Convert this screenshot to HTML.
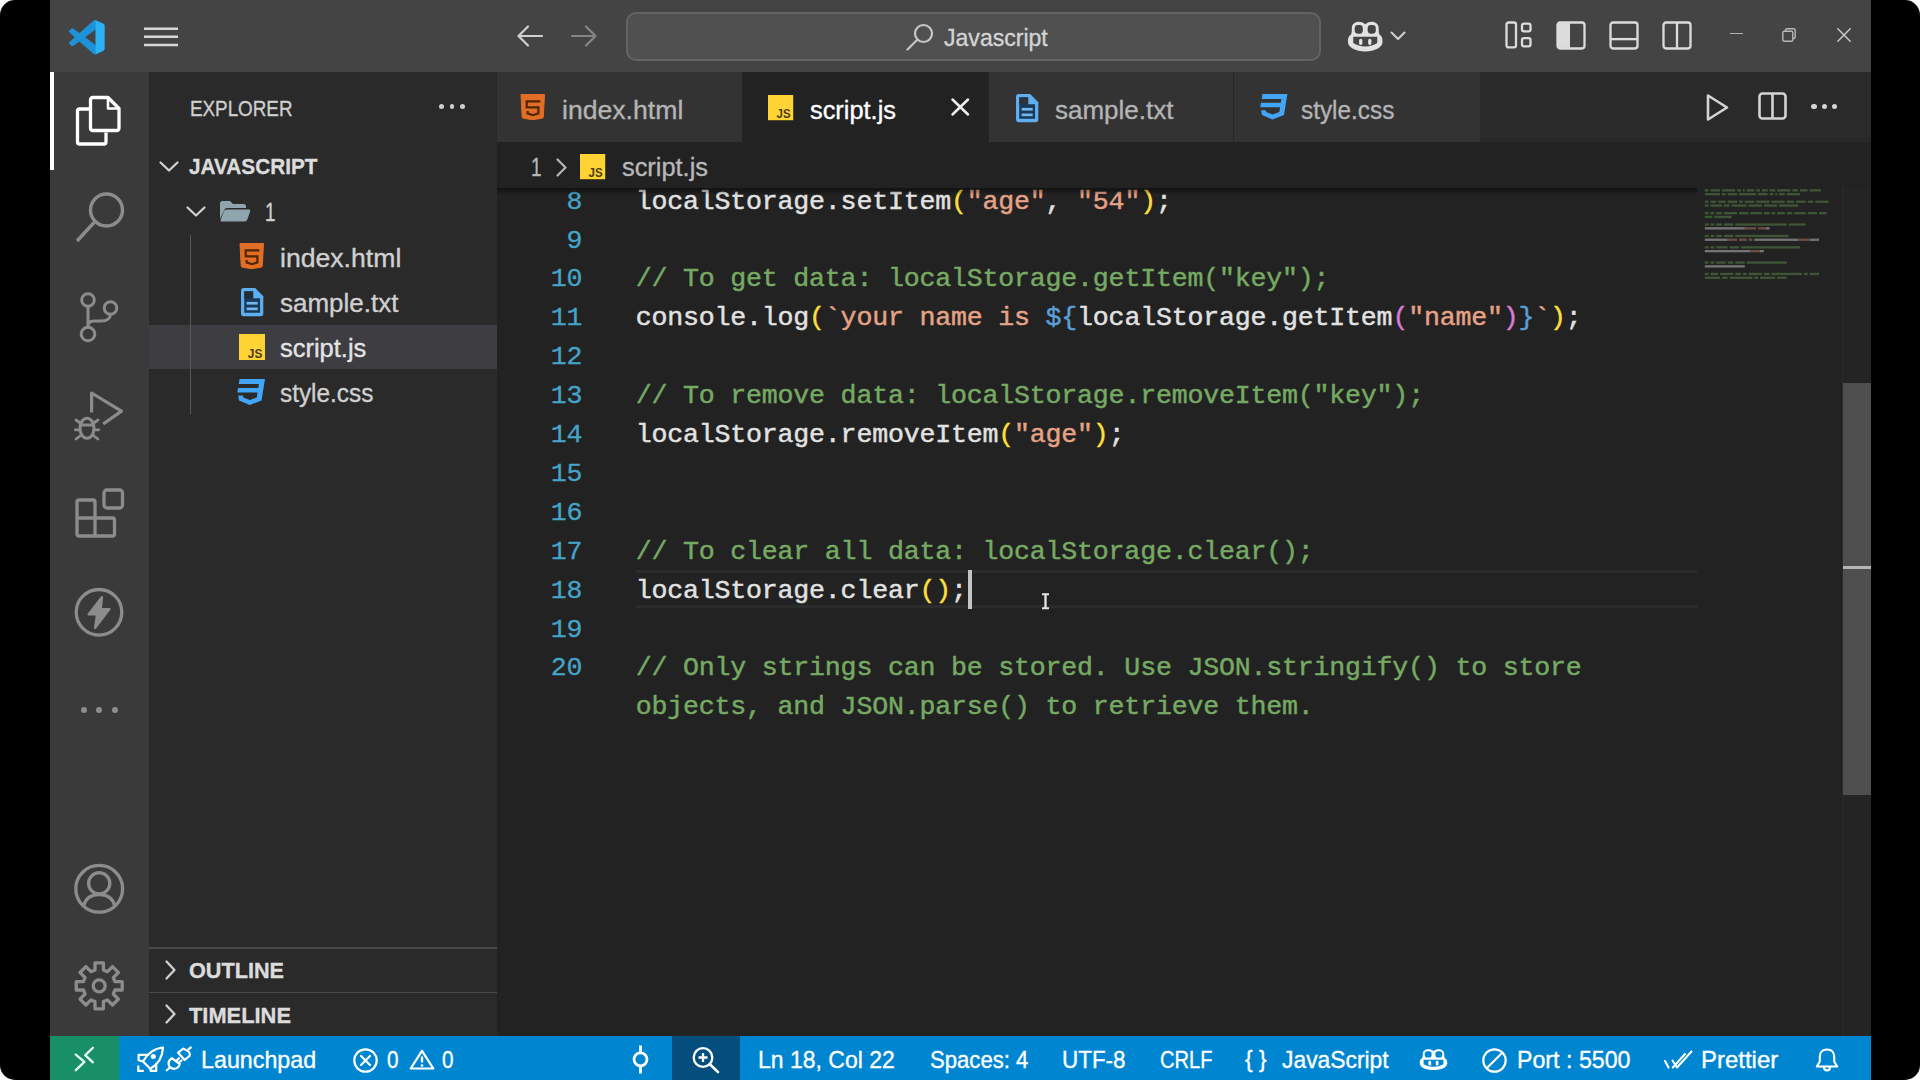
<!DOCTYPE html><html lang="en"><head><meta charset="utf-8"><title>script.js - Javascript - Visual Studio Code</title><style>
html,body{margin:0;padding:0;background:#fff;}
body{width:1920px;height:1080px;overflow:hidden;position:relative;font-family:"Liberation Sans",sans-serif;}
#frame{position:absolute;left:0;top:0;width:1920px;height:1080px;background:#000;border-radius:15px;overflow:hidden;}
.a{position:absolute;}
.t{position:absolute;white-space:nowrap;line-height:40px;height:40px;-webkit-text-stroke:0.35px;}
.m{font-family:"Liberation Mono",monospace;}
svg{position:absolute;overflow:visible;}
.cl{position:absolute;left:635.7px;white-space:pre;font-family:"Liberation Mono",monospace;font-size:26.6px;letter-spacing:-0.195px;line-height:39px;height:39px;color:#e2e2e2;-webkit-text-stroke:0.45px;}
.ln{position:absolute;left:520px;width:62.3px;text-align:right;white-space:pre;font-family:"Liberation Mono",monospace;font-size:26.6px;letter-spacing:-0.195px;line-height:39px;height:39px;color:#45a4c8;-webkit-text-stroke:0.3px;}
.c{color:#76aa63}.s{color:#e6a287}.y{color:#fbdf3c}.p{color:#d97bd9}.k{color:#5a9fd8}
</style></head><body><div id="frame">
<div class="a" style="left:50px;top:0px;width:1821px;height:1080px;background:#222222;"></div>
<div class="a" style="left:50px;top:0px;width:1821px;height:72px;background:#444444;"></div>
<div class="a" style="left:50px;top:72px;width:99px;height:964px;background:#3a3a3a;"></div>
<div class="a" style="left:149px;top:72px;width:348px;height:964px;background:#2a2a2a;"></div>
<div class="a" style="left:497px;top:72px;width:1374px;height:70px;background:#2a2a2a;"></div>
<div class="a" style="left:50px;top:1036px;width:1821px;height:44px;background:#0086d1;"></div>
<svg style="left:68.5px;top:19.5px" width="35.5" height="34.5" viewBox="0 0 100 100" preserveAspectRatio="none" >
<path d="M96.46 10.800 L75.86 0.880 C73.47 -0.270 70.62 0.210 68.75 2.090 L29.36 38.040 L12.19 25.010 C10.59 23.800 8.36 23.900 6.88 25.250 L1.37 30.260 C-0.45 31.910 -0.45 34.770 1.36 36.420 L16.25 50 L1.36 63.580 C-0.45 65.230 -0.45 68.090 1.37 69.740 L6.88 74.750 C8.36 76.100 10.59 76.200 12.19 74.990 L29.36 61.960 L68.75 97.910 C70.62 99.790 73.47 100.270 75.86 99.120 L96.47 89.200 C98.63 88.160 100 85.970 100 83.570 V16.430 C100 14.030 98.63 11.840 96.46 10.800 Z M75.02 72.700 L45.11 50 L75.02 27.300 Z" fill="#1d92d9" fill-rule="evenodd"/>
<path d="M75 0.500 L96.46 10.800 C98.63 11.840 100 14.030 100 16.430 V83.570 C100 85.970 98.63 88.160 96.47 89.200 L75 99.500 Z" fill="#2cb1f3"/>
</svg>
<svg style="left:144px;top:24px" width="34" height="26" viewBox="0 0 34 26" preserveAspectRatio="none" ><path d="M0 4.700 H34 M0 12.800 H34 M0 21 H34" stroke="#d6d6d6" stroke-width="2.600"/></svg>
<svg style="left:516px;top:24px" width="28" height="24" viewBox="0 0 28 24" preserveAspectRatio="none" ><path d="M26 12 H3 M12 2.5 L2.5 12 L12 21.5" fill="none" stroke="#d0d0d0" stroke-width="2.2" stroke-linecap="round" stroke-linejoin="round"/></svg>
<svg style="left:570px;top:24px" width="28" height="24" viewBox="0 0 28 24" preserveAspectRatio="none" ><path d="M2 12 H25 M16 2.5 L25.5 12 L16 21.5" fill="none" stroke="#858585" stroke-width="2.2" stroke-linecap="round" stroke-linejoin="round"/></svg>
<div class="a" style="left:626px;top:11.5px;width:695px;height:49.5px;background:#505050;border:2px solid #636363;border-radius:10px;box-sizing:border-box;"></div>
<svg style="left:905px;top:22px" width="30" height="30" viewBox="0 0 30 30" preserveAspectRatio="none" ><circle cx="18.5" cy="11.5" r="8.5" fill="none" stroke="#c8c8c8" stroke-width="2.2"/><path d="M12.5 17.5 L2.5 27.5" stroke="#c8c8c8" stroke-width="2.2" stroke-linecap="round"/></svg>
<span class="t " style="left:943.50px;top:17.78px;font-size:24.6px;color:#d4d4d4;transform:scaleX(0.9374);transform-origin:0 50%;">Javascript</span>
<svg style="left:1347px;top:19.5px" width="36.5" height="31.5" viewBox="0 0 38 30" preserveAspectRatio="none" >
<path d="M19 4 C14 0 5 1 5 8 C5 11 5 12 4 14 C1 16 1 18 1 21 C1 26 9 30 19 30 C29 30 37 26 37 21 C37 18 37 16 34 14 C33 12 33 11 33 8 C33 1 24 0 19 4 Z" fill="#e2e2e2"/>
<rect x="8" y="4.800" width="8.500" height="8.200" rx="3.300" fill="#444"/><rect x="21.500" y="4.800" width="8.500" height="8.200" rx="3.300" fill="#444"/>
<path d="M6.500 16 H31.500 V22 Q26 25.300 19 25.300 Q12 25.300 6.500 22 Z" fill="#444"/>
<rect x="12.600" y="17.800" width="3.400" height="6" rx="1.700" fill="#e2e2e2"/><rect x="22" y="17.800" width="3.400" height="6" rx="1.700" fill="#e2e2e2"/>
</svg>
<svg style="left:1390px;top:31px" width="16" height="10" viewBox="0 0 16 10" preserveAspectRatio="none" ><path d="M1.5 1.5 L8 8 L14.5 1.5" fill="none" stroke="#d0d0d0" stroke-width="2.1" stroke-linecap="round" stroke-linejoin="round"/></svg>
<svg style="left:1505px;top:21.3px" width="28" height="29" viewBox="0 0 28 28" preserveAspectRatio="none" ><rect x="1.5" y="1.5" width="9.5" height="24" rx="2" fill="none" stroke="#dcdcdc" stroke-width="2.3"/><rect x="17" y="2.5" width="8.5" height="7.500" rx="2" fill="none" stroke="#dcdcdc" stroke-width="2.3"/><rect x="17" y="16.5" width="8.5" height="8" rx="2" fill="none" stroke="#dcdcdc" stroke-width="2.3"/></svg>
<svg style="left:1556px;top:21.3px" width="30" height="29" viewBox="0 0 30 28" preserveAspectRatio="none" ><rect x="1.5" y="1.5" width="27" height="25" rx="2.5" fill="none" stroke="#dcdcdc" stroke-width="2.3"/><path d="M2 2 H14 V26 H2 Z" fill="#dcdcdc"/></svg>
<svg style="left:1609px;top:21.3px" width="30" height="29" viewBox="0 0 30 28" preserveAspectRatio="none" ><rect x="1.5" y="1.5" width="27" height="25" rx="2.5" fill="none" stroke="#dcdcdc" stroke-width="2.3"/><path d="M2 17.5 H28" stroke="#dcdcdc" stroke-width="2.3"/></svg>
<svg style="left:1662px;top:21.3px" width="30" height="29" viewBox="0 0 30 28" preserveAspectRatio="none" ><rect x="1.5" y="1.5" width="27" height="25" rx="2.5" fill="none" stroke="#dcdcdc" stroke-width="2.3"/><path d="M15 2 V26" stroke="#dcdcdc" stroke-width="2.3"/></svg>
<div class="a" style="left:1730px;top:32.5px;width:12.5px;height:1.5px;background:#b4b4b4;"></div>
<svg style="left:1782px;top:28px" width="14" height="14" viewBox="0 0 14 14" preserveAspectRatio="none" ><rect x="0.8" y="3.2" width="10" height="10" rx="1.5" fill="none" stroke="#b8b8b8" stroke-width="1.4"/><path d="M3.5 3 V2.2 Q3.5 0.8 5 0.8 H11.500 Q13.2 0.8 13.2 2.5 V9 Q13.2 10.500 11.800 10.500 H11" fill="none" stroke="#b8b8b8" stroke-width="1.4"/></svg>
<svg style="left:1837px;top:28px" width="14" height="14" viewBox="0 0 14 14" preserveAspectRatio="none" ><path d="M0.8 0.8 L13.2 13.2 M13.2 0.8 L0.8 13.2" stroke="#c8c8c8" stroke-width="1.5" stroke-linecap="round"/></svg>
<div class="a" style="left:50px;top:72px;width:4px;height:98px;background:#ffffff;"></div>
<svg style="left:74px;top:94px" width="48" height="53" viewBox="0 0 48 53" preserveAspectRatio="none" >
<path d="M17 15 H5.500 Q3.5 15 3.5 17 V48 Q3.5 50 5.500 50 H30 Q32 50 32 48 V38.500" fill="none" stroke="#fff" stroke-width="3.3" stroke-linejoin="round"/>
<path d="M19 3.5 H34 L45 14.500 V34 Q45 36.5 42.5 36.5 H19 Q16.5 36.5 16.5 34 V6 Q16.5 3.5 19 3.5 Z" fill="none" stroke="#fff" stroke-width="3.3" stroke-linejoin="round"/>
<path d="M34 4 V14.500 H44.500" fill="none" stroke="#fff" stroke-width="2.6" stroke-linejoin="round"/>
</svg>
<svg style="left:74px;top:190px" width="52" height="54" viewBox="0 0 52 54" preserveAspectRatio="none" ><circle cx="32.5" cy="20" r="16" fill="none" stroke="#8c8c8c" stroke-width="3.400"/><path d="M21 31.500 L3 51" stroke="#8c8c8c" stroke-width="3.400" stroke-linecap="butt"/></svg>
<svg style="left:74px;top:290px" width="50" height="56" viewBox="0 0 50 56" preserveAspectRatio="none" >
<circle cx="14" cy="10" r="6.3" fill="none" stroke="#8c8c8c" stroke-width="3"/>
<circle cx="36.5" cy="18" r="6.3" fill="none" stroke="#8c8c8c" stroke-width="3"/>
<circle cx="14" cy="44" r="6.8" fill="none" stroke="#8c8c8c" stroke-width="3"/>
<path d="M14 16.500 V37 M36.5 24.500 Q36 31 27 31 H20 Q14 31 14 36" fill="none" stroke="#8c8c8c" stroke-width="3"/>
</svg>
<svg style="left:72px;top:388px" width="54" height="56" viewBox="0 0 54 56" preserveAspectRatio="none" >
<path d="M19.600 24.400 V5 L49.500 23.100 L31.200 36" fill="none" stroke="#8c8c8c" stroke-width="3.200" stroke-linejoin="round"/>
<ellipse cx="15" cy="40.300" rx="7" ry="10" fill="none" stroke="#8c8c8c" stroke-width="3"/>
<path d="M8.500 37 H21.500 M4 32 L8.300 35 M3.300 41.800 H8 M4 51 L8.700 47.500 M26 32 L21.700 35 M26.700 41.800 H22 M26 51 L21.300 47.500" fill="none" stroke="#8c8c8c" stroke-width="2.800" stroke-linecap="round"/>
</svg>
<svg style="left:74px;top:487px" width="52" height="52" viewBox="0 0 52 52" preserveAspectRatio="none" >
<path d="M5 13 H19 Q21 13 21 15 V31 H38.500 Q40.500 31 40.500 33 V47 Q40.500 49 38.500 49 H5 Q3 49 3 47 V15 Q3 13 5 13 Z M3 31 H21 V49" fill="none" stroke="#8c8c8c" stroke-width="3.300" stroke-linejoin="round"/>
<rect x="30" y="3" width="18.5" height="18" rx="3" fill="none" stroke="#8c8c8c" stroke-width="3.300"/>
</svg>
<svg style="left:74px;top:587px" width="50" height="50" viewBox="0 0 50 50" preserveAspectRatio="none" >
<circle cx="25" cy="25.3" r="22.8" fill="none" stroke="#8c8c8c" stroke-width="3.300"/>
<path d="M28 10 L14.500 27.500 H23 L21 41 L35.500 22 H26.800 Z" fill="#8c8c8c" stroke="#8c8c8c" stroke-width="2.200" stroke-linejoin="round"/>
</svg>
<div class="a" style="left:80.5px;top:707px;width:6px;height:6px;border-radius:3px;background:#8c8c8c"></div>
<div class="a" style="left:96px;top:707px;width:6px;height:6px;border-radius:3px;background:#8c8c8c"></div>
<div class="a" style="left:111.5px;top:707px;width:6px;height:6px;border-radius:3px;background:#8c8c8c"></div>
<svg style="left:73px;top:863px" width="52" height="52" viewBox="0 0 52 52" preserveAspectRatio="none" >
<circle cx="26.200" cy="25.800" r="23.400" fill="none" stroke="#8c8c8c" stroke-width="3.300"/>
<circle cx="26.200" cy="20.300" r="10.600" fill="none" stroke="#8c8c8c" stroke-width="3.300"/>
<path d="M10.800 42.500 Q13.500 31.600 26.200 31.600 Q38.900 31.600 41.600 42.500" fill="none" stroke="#8c8c8c" stroke-width="3.300"/>
</svg>
<svg style="left:73px;top:960px" width="52" height="52" viewBox="0 0 52 52" preserveAspectRatio="none" ><path d="M22.0 10.0 L22.0 2.8 L30.4 2.8 L30.4 10.0 L34.4 11.7 L39.5 6.6 L45.4 12.5 L40.3 17.6 L42.0 21.6 L49.2 21.6 L49.2 30.0 L42.0 30.0 L40.3 34.0 L45.4 39.1 L39.5 45.0 L34.4 39.9 L30.4 41.6 L30.4 48.8 L22.0 48.8 L22.0 41.6 L18.0 39.9 L12.9 45.0 L7.0 39.1 L12.1 34.0 L10.4 30.0 L3.2 30.0 L3.2 21.6 L10.4 21.6 L12.1 17.6 L7.0 12.5 L12.9 6.6 L18.0 11.7 Z" fill="none" stroke="#8c8c8c" stroke-width="3.300" stroke-linejoin="round"/><circle cx="26.200" cy="25.800" r="6" fill="none" stroke="#8c8c8c" stroke-width="3.300"/></svg>
<span class="t " style="left:190.00px;top:89.17px;font-size:22.6px;color:#cfcfcf;transform:scaleX(0.8328);transform-origin:0 50%;">EXPLORER</span>
<div class="a" style="left:439.3px;top:104.3px;width:4.4px;height:4.4px;border-radius:3px;background:#d0d0d0"></div>
<div class="a" style="left:449.8px;top:104.3px;width:4.4px;height:4.4px;border-radius:3px;background:#d0d0d0"></div>
<div class="a" style="left:460.3px;top:104.3px;width:4.4px;height:4.4px;border-radius:3px;background:#d0d0d0"></div>
<svg style="left:159px;top:161px" width="20" height="11" viewBox="0 0 20 11" preserveAspectRatio="none" ><path d="M1.5 1.500 L10.0 9.5 L18.5 1.500" fill="none" stroke="#d0d0d0" stroke-width="2.3" stroke-linecap="round" stroke-linejoin="round"/></svg>
<span class="t " style="left:188.50px;top:147.17px;font-size:22.6px;color:#dcdcdc;font-weight:700;transform:scaleX(0.9191);transform-origin:0 50%;">JAVASCRIPT</span>
<svg style="left:186px;top:205.5px" width="20" height="11" viewBox="0 0 20 11" preserveAspectRatio="none" ><path d="M1.5 1.500 L10.0 9.5 L18.5 1.500" fill="none" stroke="#d0d0d0" stroke-width="2.3" stroke-linecap="round" stroke-linejoin="round"/></svg>
<svg style="left:219px;top:200px" width="32" height="22" viewBox="0 0 32 22" preserveAspectRatio="none" >
<path d="M1 19 V3.500 Q1 1 3.500 1 H11 L14 4 H24.5 Q27 4 27 6.500 V8 H8 Q6 8 5.300 10 Z" fill="#90a4ae"/>
<path d="M7.500 9.500 H30 Q31.800 9.500 31.200 11.300 L28.300 19.500 Q27.700 21.500 25.500 21.500 H3 Q1 21.500 1.800 19.500 L5 11 Q5.600 9.500 7.500 9.500 Z" fill="#90a4ae"/>
</svg>
<span class="t " style="left:264.80px;top:192.49px;font-size:26px;color:#d0d0d0;transform:scaleX(0.7260);transform-origin:0 50%;">1</span>
<div class="a" style="left:149px;top:325px;width:348px;height:44px;background:#3d3d42;"></div>
<div class="a" style="left:190px;top:235px;width:1.2px;height:179px;background:#585858;"></div>
<svg style="left:238.5px;top:242.5px" width="25.5" height="26.0" viewBox="0 0 25.5 26" preserveAspectRatio="none" >
<path d="M1 0.500 H24.500 L23.300 23 Q23.200 24 22.200 24.200 L12.800 25.700 L3.300 24.200 Q2.300 24 2.200 23 Z" fill="#e26d25" stroke="#e26d25" stroke-width="1" stroke-linejoin="round"/>
<path d="M20.300 7.400 H6.700 V13.300 H18.400 V19.400 L12.900 21.200 L7.600 19.400 V17" fill="none" stroke="#4f2608" stroke-width="2.200"/>
</svg>
<span class="t " style="left:279.50px;top:238.06px;font-size:25.8px;color:#d0d0d0;transform:scaleX(1.0316);transform-origin:0 50%;">index.html</span>
<svg style="left:239.5px;top:286.9px" width="24.3" height="30.2" viewBox="0 0 24 29" preserveAspectRatio="none" >
<path d="M3.500 1 H15 L23 9 V25.500 Q23 28 20.500 28 H3.500 Q1 28 1 25.500 V3.500 Q1 1 3.500 1 Z" fill="#5eaef0"/>
<path d="M4.200 4.200 H13 V10.800 H19.800 V24.800 H4.200 Z" fill="#17395a"/>
<path d="M4.200 4.200 H13 V10.800 H4.200 Z" fill="#2a2a2a" opacity="0.75"/>
<rect x="6.500" y="14.300" width="11" height="2.600" fill="#74b6ea"/><rect x="6.500" y="19.700" width="11" height="2.600" fill="#74b6ea"/>
</svg>
<span class="t " style="left:279.50px;top:283.06px;font-size:25.8px;color:#d0d0d0;transform:scaleX(1.0069);transform-origin:0 50%;">sample.txt</span>
<svg style="left:238.5px;top:334px" width="26.0" height="26.0" viewBox="0 0 26 26" preserveAspectRatio="none" >
<rect x="0" y="0" width="26" height="26" fill="#fdd433"/>
<text x="8.800" y="23.600" font-family="Liberation Sans, sans-serif" font-weight="700" font-size="12.500" fill="#4d3c0c" textLength="14.500" lengthAdjust="spacingAndGlyphs">JS</text>
</svg>
<span class="t " style="left:279.50px;top:328.06px;font-size:25.8px;color:#e4e4e4;transform:scaleX(0.9871);transform-origin:0 50%;">script.js</span>
<svg style="left:236.3px;top:379px" width="29.0" height="26.0" viewBox="0 0 29 26" preserveAspectRatio="none" >
<path d="M3.500 0 H29 L25.500 21.500 L13.800 26 L3 21.500 L2.200 16.500 H7 L7.300 18.500 L14 21 L20.800 18.500 L21.500 13.500 H1.300 L2 9 H22.300 L22.800 5 H2.800 Z" fill="#42a5f5"/>
</svg>
<span class="t " style="left:279.50px;top:373.06px;font-size:25.8px;color:#d0d0d0;transform:scaleX(0.9433);transform-origin:0 50%;">style.css</span>
<div class="a" style="left:149px;top:947px;width:348px;height:1.5px;background:#4a4a4a;"></div>
<div class="a" style="left:149px;top:991.5px;width:348px;height:1.5px;background:#4a4a4a;"></div>
<svg style="left:164.5px;top:959.5px" width="11" height="20" viewBox="0 0 11 20" preserveAspectRatio="none" ><path d="M1.5 1.500 L9.5 10.0 L1.500 18.5" fill="none" stroke="#d0d0d0" stroke-width="2.3" stroke-linecap="round" stroke-linejoin="round"/></svg>
<span class="t " style="left:188.50px;top:951.17px;font-size:22.6px;color:#dcdcdc;font-weight:700;transform:scaleX(0.9578);transform-origin:0 50%;">OUTLINE</span>
<svg style="left:164.5px;top:1004px" width="11" height="20" viewBox="0 0 11 20" preserveAspectRatio="none" ><path d="M1.5 1.500 L9.5 10.0 L1.500 18.5" fill="none" stroke="#d0d0d0" stroke-width="2.3" stroke-linecap="round" stroke-linejoin="round"/></svg>
<span class="t " style="left:189.00px;top:995.67px;font-size:22.6px;color:#dcdcdc;font-weight:700;transform:scaleX(0.9672);transform-origin:0 50%;">TIMELINE</span>
<div class="a" style="left:497px;top:72px;width:246px;height:70px;background:#333333;"></div>
<div class="a" style="left:743px;top:72px;width:245px;height:70.5px;background:#222222;"></div>
<div class="a" style="left:988px;top:72px;width:245px;height:70px;background:#333333;"></div>
<div class="a" style="left:1234px;top:72px;width:245.5px;height:70px;background:#333333;"></div>
<div class="a" style="left:742px;top:72px;width:1.2px;height:70px;background:#272727;"></div>
<div class="a" style="left:988px;top:72px;width:1.2px;height:70px;background:#272727;"></div>
<div class="a" style="left:1233px;top:72px;width:1.2px;height:70px;background:#272727;"></div>
<svg style="left:520.4px;top:94px" width="25.5" height="26.0" viewBox="0 0 25.5 26" preserveAspectRatio="none" >
<path d="M1 0.500 H24.500 L23.300 23 Q23.200 24 22.200 24.200 L12.800 25.700 L3.300 24.200 Q2.300 24 2.200 23 Z" fill="#e26d25" stroke="#e26d25" stroke-width="1" stroke-linejoin="round"/>
<path d="M20.300 7.400 H6.700 V13.300 H18.400 V19.400 L12.900 21.200 L7.600 19.400 V17" fill="none" stroke="#4f2608" stroke-width="2.200"/>
</svg>
<span class="t " style="left:562.00px;top:90.06px;font-size:25.8px;color:#b4b4b4;transform:scaleX(1.0316);transform-origin:0 50%;">index.html</span>
<svg style="left:768px;top:95px" width="25.22" height="25.22" viewBox="0 0 26 26" preserveAspectRatio="none" >
<rect x="0" y="0" width="26" height="26" fill="#fdd433"/>
<text x="8.800" y="23.600" font-family="Liberation Sans, sans-serif" font-weight="700" font-size="12.500" fill="#4d3c0c" textLength="14.500" lengthAdjust="spacingAndGlyphs">JS</text>
</svg>
<span class="t " style="left:809.50px;top:90.06px;font-size:25.8px;color:#ffffff;transform:scaleX(0.9836);transform-origin:0 50%;">script.js</span>
<svg style="left:950.5px;top:98px" width="18.5" height="18" viewBox="0 0 18.5 18" preserveAspectRatio="none" ><path d="M1.5 1.500 L17 16.500 M17 1.500 L1.500 16.500" stroke="#f0f0f0" stroke-width="2.5" stroke-linecap="round"/></svg>
<svg style="left:1015px;top:92.9px" width="24.3" height="30.2" viewBox="0 0 24 29" preserveAspectRatio="none" >
<path d="M3.500 1 H15 L23 9 V25.500 Q23 28 20.500 28 H3.500 Q1 28 1 25.500 V3.500 Q1 1 3.500 1 Z" fill="#5eaef0"/>
<path d="M4.200 4.200 H13 V10.800 H19.800 V24.800 H4.200 Z" fill="#17395a"/>
<path d="M4.200 4.200 H13 V10.800 H4.200 Z" fill="#333333" opacity="0.75"/>
<rect x="6.500" y="14.300" width="11" height="2.600" fill="#74b6ea"/><rect x="6.500" y="19.700" width="11" height="2.600" fill="#74b6ea"/>
</svg>
<span class="t " style="left:1055.00px;top:90.06px;font-size:25.8px;color:#b4b4b4;transform:scaleX(1.0078);transform-origin:0 50%;">sample.txt</span>
<svg style="left:1258.5px;top:94px" width="28.419999999999998" height="25.48" viewBox="0 0 29 26" preserveAspectRatio="none" >
<path d="M3.500 0 H29 L25.500 21.500 L13.800 26 L3 21.500 L2.200 16.500 H7 L7.300 18.500 L14 21 L20.800 18.500 L21.500 13.500 H1.300 L2 9 H22.300 L22.800 5 H2.800 Z" fill="#42a5f5"/>
</svg>
<span class="t " style="left:1301.00px;top:90.06px;font-size:25.8px;color:#b4b4b4;transform:scaleX(0.9433);transform-origin:0 50%;">style.css</span>
<svg style="left:1705px;top:92px" width="26" height="31" viewBox="0 0 26 31" preserveAspectRatio="none" ><path d="M3 3.500 L22 15.500 L3 27.500 Z" fill="none" stroke="#d4d4d4" stroke-width="2.6" stroke-linejoin="round"/></svg>
<svg style="left:1758px;top:92px" width="29" height="28" viewBox="0 0 29 28" preserveAspectRatio="none" ><rect x="1.5" y="1.500" width="26" height="25" rx="3" fill="none" stroke="#d4d4d4" stroke-width="2.6"/><path d="M14.500 2 V26" stroke="#d4d4d4" stroke-width="2.6"/></svg>
<div class="a" style="left:1811.4px;top:104.10000000000001px;width:5.2px;height:5.2px;border-radius:3px;background:#d4d4d4"></div>
<div class="a" style="left:1821.7px;top:104.10000000000001px;width:5.2px;height:5.2px;border-radius:3px;background:#d4d4d4"></div>
<div class="a" style="left:1832.1000000000001px;top:104.10000000000001px;width:5.2px;height:5.2px;border-radius:3px;background:#d4d4d4"></div>
<span class="t " style="left:531.00px;top:147.06px;font-size:25.8px;color:#b8b8b8;transform:scaleX(0.7316);transform-origin:0 50%;">1</span>
<svg style="left:556px;top:157.5px" width="11" height="19" viewBox="0 0 11 19" preserveAspectRatio="none" ><path d="M1.5 1.500 L9.5 9.5 L1.500 17.5" fill="none" stroke="#b8b8b8" stroke-width="2.2" stroke-linecap="round" stroke-linejoin="round"/></svg>
<svg style="left:580px;top:154px" width="25.22" height="25.22" viewBox="0 0 26 26" preserveAspectRatio="none" >
<rect x="0" y="0" width="26" height="26" fill="#fdd433"/>
<text x="8.800" y="23.600" font-family="Liberation Sans, sans-serif" font-weight="700" font-size="12.500" fill="#4d3c0c" textLength="14.500" lengthAdjust="spacingAndGlyphs">JS</text>
</svg>
<span class="t " style="left:621.50px;top:147.06px;font-size:25.8px;color:#b8b8b8;transform:scaleX(0.9836);transform-origin:0 50%;">script.js</span>
<div class="a" style="left:636px;top:570.3px;width:1061px;height:3px;background:#2c2c2c;"></div>
<div class="a" style="left:636px;top:605px;width:1061px;height:3px;background:#2c2c2c;"></div>
<div class="ln" style="top:182.61px">8</div>
<div class="ln" style="top:221.51px">9</div>
<div class="ln" style="top:260.41px">10</div>
<div class="ln" style="top:299.31px">11</div>
<div class="ln" style="top:338.21px">12</div>
<div class="ln" style="top:377.11px">13</div>
<div class="ln" style="top:416.01px">14</div>
<div class="ln" style="top:454.91px">15</div>
<div class="ln" style="top:493.81px">16</div>
<div class="ln" style="top:532.71px">17</div>
<div class="ln" style="top:571.61px">18</div>
<div class="ln" style="top:610.51px">19</div>
<div class="ln" style="top:649.41px">20</div>
<div class="cl" style="top:182.61px">localStorage.setItem<span class="y">(</span><span class="s">"age"</span>, <span class="s">"54"</span><span class="y">)</span>;</div>
<div class="cl" style="top:260.41px"><span class="c">// To get data<span>:</span> localStorage.getItem("key");</span></div>
<div class="cl" style="top:299.31px">console.log<span class="y">(</span><span class="s">`your name is </span><span class="k">${</span>localStorage.getItem<span class="p">(</span><span class="s">"name"</span><span class="p">)</span><span class="k">}</span><span class="s">`</span><span class="y">)</span>;</div>
<div class="cl" style="top:377.11px"><span class="c">// To remove data<span>:</span> localStorage.removeItem("key");</span></div>
<div class="cl" style="top:416.01px">localStorage.removeItem<span class="y">(</span><span class="s">"age"</span><span class="y">)</span>;</div>
<div class="cl" style="top:532.71px"><span class="c">// To clear all data<span>:</span> localStorage.clear();</span></div>
<div class="cl" style="top:571.61px">localStorage.clear<span class="y">()</span>;</div>
<div class="cl" style="top:649.41px"><span class="c">// Only strings can be stored. Use JSON.stringify() to store</span></div>
<div class="cl" style="top:688.31px"><span class="c">objects, and JSON.parse() to retrieve them.</span></div>
<div class="a" style="left:968px;top:570px;width:4px;height:38.5px;background:#c4c4c4;"></div>
<svg style="left:1042px;top:593px" width="7" height="16.5" viewBox="0 0 7 16.5" preserveAspectRatio="none" ><path d="M0 1.200 H7 M0 15.300 H7" stroke="#e6e6e6" stroke-width="2"/><path d="M3.500 1 V15.500" stroke="#e6e6e6" stroke-width="2.300"/></svg>
<div class="a" style="left:497px;top:188px;width:1200px;height:7px;background:linear-gradient(#00000077,#00000044 50%,#00000000)"></div>
<div class="a" style="left:1842px;top:188px;width:29px;height:848px;background:#242424;"></div>
<div class="a" style="left:1842px;top:188px;width:1px;height:848px;background:#2b2b2b;"></div>
<div class="a" style="left:1843px;top:383px;width:28px;height:412px;background:#4e4e4e;"></div>
<div class="a" style="left:1843px;top:566px;width:28px;height:2.5px;background:#b4b4b4;"></div>
<svg style="left:0;top:0;opacity:.5" width="1920" height="1080" viewBox="0 0 1920 1080"><rect x="1704.8" y="189.2" width="3.8" height="2.300" fill="#5d8a4a"/><rect x="1710.5" y="189.2" width="9.5" height="2.300" fill="#5d8a4a"/><rect x="1721.9" y="189.2" width="13.3" height="2.300" fill="#5d8a4a"/><rect x="1737.2" y="189.2" width="3.8" height="2.300" fill="#5d8a4a"/><rect x="1742.9" y="189.2" width="1.9" height="2.300" fill="#5d8a4a"/><rect x="1746.7" y="189.2" width="7.6" height="2.300" fill="#5d8a4a"/><rect x="1756.2" y="189.2" width="3.8" height="2.300" fill="#5d8a4a"/><rect x="1762.0" y="189.2" width="5.7" height="2.300" fill="#5d8a4a"/><rect x="1769.6" y="189.2" width="5.7" height="2.300" fill="#5d8a4a"/><rect x="1777.2" y="189.2" width="13.3" height="2.300" fill="#5d8a4a"/><rect x="1792.4" y="189.2" width="5.7" height="2.300" fill="#5d8a4a"/><rect x="1800.0" y="189.2" width="7.6" height="2.300" fill="#5d8a4a"/><rect x="1809.6" y="189.2" width="11.4" height="2.300" fill="#5d8a4a"/><rect x="1704.8" y="193.0" width="15.2" height="2.300" fill="#5d8a4a"/><rect x="1721.9" y="193.0" width="3.8" height="2.300" fill="#5d8a4a"/><rect x="1727.7" y="193.0" width="9.5" height="2.300" fill="#5d8a4a"/><rect x="1739.1" y="193.0" width="17.1" height="2.300" fill="#5d8a4a"/><rect x="1758.1" y="193.0" width="9.5" height="2.300" fill="#5d8a4a"/><rect x="1769.6" y="193.0" width="3.8" height="2.300" fill="#5d8a4a"/><rect x="1775.3" y="193.0" width="1.9" height="2.300" fill="#5d8a4a"/><rect x="1779.1" y="193.0" width="5.7" height="2.300" fill="#5d8a4a"/><rect x="1786.7" y="193.0" width="13.3" height="2.300" fill="#5d8a4a"/><rect x="1704.8" y="200.6" width="3.8" height="2.300" fill="#5d8a4a"/><rect x="1710.5" y="200.6" width="5.7" height="2.300" fill="#5d8a4a"/><rect x="1718.1" y="200.6" width="7.6" height="2.300" fill="#5d8a4a"/><rect x="1727.7" y="200.6" width="9.5" height="2.300" fill="#5d8a4a"/><rect x="1739.1" y="200.6" width="3.8" height="2.300" fill="#5d8a4a"/><rect x="1744.8" y="200.6" width="9.5" height="2.300" fill="#5d8a4a"/><rect x="1756.2" y="200.6" width="13.3" height="2.300" fill="#5d8a4a"/><rect x="1771.5" y="200.6" width="13.3" height="2.300" fill="#5d8a4a"/><rect x="1786.7" y="200.6" width="7.6" height="2.300" fill="#5d8a4a"/><rect x="1796.2" y="200.6" width="9.5" height="2.300" fill="#5d8a4a"/><rect x="1807.7" y="200.6" width="5.7" height="2.300" fill="#5d8a4a"/><rect x="1815.3" y="200.6" width="13.3" height="2.300" fill="#5d8a4a"/><rect x="1704.8" y="204.4" width="3.8" height="2.300" fill="#5d8a4a"/><rect x="1710.5" y="204.4" width="11.4" height="2.300" fill="#5d8a4a"/><rect x="1723.8" y="204.4" width="5.7" height="2.300" fill="#5d8a4a"/><rect x="1731.5" y="204.4" width="15.2" height="2.300" fill="#5d8a4a"/><rect x="1748.6" y="204.4" width="13.3" height="2.300" fill="#5d8a4a"/><rect x="1763.9" y="204.4" width="13.3" height="2.300" fill="#5d8a4a"/><rect x="1779.1" y="204.4" width="19.1" height="2.300" fill="#5d8a4a"/><rect x="1704.8" y="212.0" width="3.8" height="2.300" fill="#5d8a4a"/><rect x="1710.5" y="212.0" width="3.8" height="2.300" fill="#5d8a4a"/><rect x="1716.2" y="212.0" width="5.7" height="2.300" fill="#5d8a4a"/><rect x="1723.8" y="212.0" width="13.3" height="2.300" fill="#5d8a4a"/><rect x="1739.1" y="212.0" width="9.5" height="2.300" fill="#5d8a4a"/><rect x="1750.5" y="212.0" width="11.4" height="2.300" fill="#5d8a4a"/><rect x="1763.9" y="212.0" width="5.7" height="2.300" fill="#5d8a4a"/><rect x="1771.5" y="212.0" width="3.8" height="2.300" fill="#5d8a4a"/><rect x="1777.2" y="212.0" width="7.6" height="2.300" fill="#5d8a4a"/><rect x="1786.7" y="212.0" width="5.7" height="2.300" fill="#5d8a4a"/><rect x="1794.3" y="212.0" width="11.4" height="2.300" fill="#5d8a4a"/><rect x="1807.7" y="212.0" width="9.5" height="2.300" fill="#5d8a4a"/><rect x="1819.1" y="212.0" width="7.6" height="2.300" fill="#5d8a4a"/><rect x="1704.8" y="215.8" width="7.6" height="2.300" fill="#5d8a4a"/><rect x="1714.3" y="215.8" width="17.1" height="2.300" fill="#5d8a4a"/><rect x="1704.8" y="223.4" width="3.8" height="2.300" fill="#5d8a4a"/><rect x="1710.5" y="223.4" width="3.8" height="2.300" fill="#5d8a4a"/><rect x="1716.2" y="223.4" width="5.7" height="2.300" fill="#5d8a4a"/><rect x="1723.8" y="223.4" width="9.5" height="2.300" fill="#5d8a4a"/><rect x="1735.3" y="223.4" width="51.4" height="2.300" fill="#5d8a4a"/><rect x="1788.6" y="223.4" width="17.1" height="2.300" fill="#5d8a4a"/><rect x="1704.8" y="227.2" width="40.0" height="2.300" fill="#c8c8c8"/><rect x="1744.8" y="227.2" width="11.4" height="2.300" fill="#b37d66"/><rect x="1758.1" y="227.2" width="7.6" height="2.300" fill="#b37d66"/><rect x="1765.8" y="227.2" width="3.8" height="2.300" fill="#c8c8c8"/><rect x="1704.8" y="234.8" width="3.8" height="2.300" fill="#5d8a4a"/><rect x="1710.5" y="234.8" width="3.8" height="2.300" fill="#5d8a4a"/><rect x="1716.2" y="234.8" width="5.7" height="2.300" fill="#5d8a4a"/><rect x="1723.8" y="234.8" width="9.5" height="2.300" fill="#5d8a4a"/><rect x="1735.3" y="234.8" width="53.3" height="2.300" fill="#5d8a4a"/><rect x="1704.8" y="238.6" width="22.9" height="2.300" fill="#c8c8c8"/><rect x="1727.7" y="238.6" width="9.5" height="2.300" fill="#b37d66"/><rect x="1739.1" y="238.6" width="7.6" height="2.300" fill="#b37d66"/><rect x="1748.6" y="238.6" width="3.8" height="2.300" fill="#b37d66"/><rect x="1754.3" y="238.6" width="43.8" height="2.300" fill="#c8c8c8"/><rect x="1798.1" y="238.6" width="11.4" height="2.300" fill="#b37d66"/><rect x="1809.6" y="238.6" width="9.5" height="2.300" fill="#c8c8c8"/><rect x="1704.8" y="246.2" width="3.8" height="2.300" fill="#5d8a4a"/><rect x="1710.5" y="246.2" width="3.8" height="2.300" fill="#5d8a4a"/><rect x="1716.2" y="246.2" width="11.4" height="2.300" fill="#5d8a4a"/><rect x="1729.6" y="246.2" width="9.5" height="2.300" fill="#5d8a4a"/><rect x="1741.0" y="246.2" width="59.1" height="2.300" fill="#5d8a4a"/><rect x="1704.8" y="250.0" width="45.7" height="2.300" fill="#c8c8c8"/><rect x="1750.5" y="250.0" width="9.5" height="2.300" fill="#b37d66"/><rect x="1760.0" y="250.0" width="3.8" height="2.300" fill="#c8c8c8"/><rect x="1704.8" y="261.4" width="3.8" height="2.300" fill="#5d8a4a"/><rect x="1710.5" y="261.4" width="3.8" height="2.300" fill="#5d8a4a"/><rect x="1716.2" y="261.4" width="9.5" height="2.300" fill="#5d8a4a"/><rect x="1727.7" y="261.4" width="5.7" height="2.300" fill="#5d8a4a"/><rect x="1735.3" y="261.4" width="9.5" height="2.300" fill="#5d8a4a"/><rect x="1746.7" y="261.4" width="40.0" height="2.300" fill="#5d8a4a"/><rect x="1704.8" y="265.2" width="40.0" height="2.300" fill="#c8c8c8"/><rect x="1704.8" y="272.8" width="3.8" height="2.300" fill="#5d8a4a"/><rect x="1710.5" y="272.8" width="7.6" height="2.300" fill="#5d8a4a"/><rect x="1720.0" y="272.8" width="13.3" height="2.300" fill="#5d8a4a"/><rect x="1735.3" y="272.8" width="5.7" height="2.300" fill="#5d8a4a"/><rect x="1742.9" y="272.8" width="3.8" height="2.300" fill="#5d8a4a"/><rect x="1748.6" y="272.8" width="13.3" height="2.300" fill="#5d8a4a"/><rect x="1763.9" y="272.8" width="5.7" height="2.300" fill="#5d8a4a"/><rect x="1771.5" y="272.8" width="30.5" height="2.300" fill="#5d8a4a"/><rect x="1803.9" y="272.8" width="3.8" height="2.300" fill="#5d8a4a"/><rect x="1809.6" y="272.8" width="9.5" height="2.300" fill="#5d8a4a"/><rect x="1704.8" y="276.6" width="15.2" height="2.300" fill="#5d8a4a"/><rect x="1721.9" y="276.6" width="5.7" height="2.300" fill="#5d8a4a"/><rect x="1729.6" y="276.6" width="22.9" height="2.300" fill="#5d8a4a"/><rect x="1754.3" y="276.6" width="3.8" height="2.300" fill="#5d8a4a"/><rect x="1760.0" y="276.6" width="15.2" height="2.300" fill="#5d8a4a"/><rect x="1777.2" y="276.6" width="9.5" height="2.300" fill="#5d8a4a"/></svg>
<div class="a" style="left:50px;top:1036px;width:69px;height:44px;background:#198f67;"></div>
<svg style="left:75px;top:1047px" width="20" height="24" viewBox="0 0 20 24" preserveAspectRatio="none" ><path d="M0.800 7.600 L9.400 14.900 L0.800 23.200 M17.900 0.700 L10.200 8.200 L17.900 15.300" fill="none" stroke="#e8fff6" stroke-width="2.300" stroke-linecap="round" stroke-linejoin="round"/></svg>
<svg style="left:136.5px;top:1046px" width="27" height="27" viewBox="0 0 27 27" preserveAspectRatio="none" >
<g fill="none" stroke="#ffffff" stroke-width="2.200" stroke-linejoin="round" stroke-linecap="round">
<path d="M26 1.500 C17.500 2.200 10 8 6 15.500 L13.300 22.800 C21 18.500 25.500 10.500 26 1.500 Z"/>
<path d="M10.800 8.900 H1.600 V14.300 L6 15.500 M19.200 17.800 V24.900 H13.800 L13.300 22.800"/>
<path d="M1.300 19.600 V24.900 H6.800" stroke-linecap="butt" stroke-linejoin="miter"/>
</g>
<circle cx="16.300" cy="10.600" r="2.500" fill="#ffffff"/>
</svg>
<svg style="left:167px;top:1047px" width="24" height="24" viewBox="0 0 24 24" preserveAspectRatio="none" >
<g fill="none" stroke="#ffffff" stroke-width="2.200" stroke-linecap="round" stroke-linejoin="round">
<path d="M11 5.600 L16.300 1.600 L21.800 4.600 Q23.500 7 22.500 9 L17.600 13 Z"/>
<path d="M21.300 2.300 L23.800 0.500"/>
<path d="M4.800 11.200 L12.800 17 Q11.500 21.500 7 21.800 Q2.500 21.500 1.500 17 Q1.300 13.500 4.800 11.200 Z"/>
<path d="M2.300 21 L-0.200 23.300 M9.500 13.500 L12 11.300 M12 15.500 L14.500 13.500"/>
</g>
</svg>
<span class="t " style="left:201.00px;top:1039.58px;font-size:24.3px;color:#ffffff;transform:scaleX(0.9580);transform-origin:0 50%;">Launchpad</span>
<svg style="left:353px;top:1047.5px" width="25" height="25" viewBox="0 0 25 25" preserveAspectRatio="none" ><circle cx="12.5" cy="12.500" r="11.2" fill="none" stroke="#ffffff" stroke-width="2.2"/><path d="M8 8 L17 17 M17 8 L8 17" stroke="#ffffff" stroke-width="2.2" stroke-linecap="round"/></svg>
<span class="t " style="left:386.70px;top:1039.58px;font-size:24.3px;color:#ffffff;transform:scaleX(0.8508);transform-origin:0 50%;">0</span>
<svg style="left:408.5px;top:1048.5px" width="26" height="21" viewBox="0 0 26 21" preserveAspectRatio="none" ><path d="M13 1.800 L24.300 19.500 H1.700 Z" fill="none" stroke="#ffffff" stroke-width="2.2" stroke-linejoin="round"/><path d="M13 7.500 V13.500" stroke="#ffffff" stroke-width="2.3"/><circle cx="13" cy="16.500" r="1.300" fill="#ffffff"/></svg>
<span class="t " style="left:441.70px;top:1039.58px;font-size:24.3px;color:#ffffff;transform:scaleX(0.8508);transform-origin:0 50%;">0</span>
<svg style="left:630px;top:1045px" width="21" height="29" viewBox="0 0 21 29" preserveAspectRatio="none" ><circle cx="10.5" cy="14.300" r="6.500" fill="none" stroke="#ffffff" stroke-width="2.800"/><path d="M10.500 0.500 V7.500 M10.500 21 V28.500" stroke="#ffffff" stroke-width="2.800"/></svg>
<div class="a" style="left:671.5px;top:1036px;width:68.5px;height:44px;background:#044e7e;"></div>
<svg style="left:692px;top:1046px" width="28" height="28" viewBox="0 0 28 28" preserveAspectRatio="none" ><circle cx="11" cy="11.500" r="9.300" fill="none" stroke="#ffffff" stroke-width="2.300"/><path d="M17.800 18.300 L26 26" stroke="#ffffff" stroke-width="2.600" stroke-linecap="round"/><path d="M6.500 11.500 H15.500 M11 7 V16" stroke="#ffffff" stroke-width="2.300"/></svg>
<span class="t " style="left:757.50px;top:1039.58px;font-size:24.3px;color:#ffffff;transform:scaleX(0.9464);transform-origin:0 50%;">Ln 18, Col 22</span>
<span class="t " style="left:929.50px;top:1039.58px;font-size:24.3px;color:#ffffff;transform:scaleX(0.9105);transform-origin:0 50%;">Spaces: 4</span>
<span class="t " style="left:1062.20px;top:1039.58px;font-size:24.3px;color:#ffffff;transform:scaleX(0.9226);transform-origin:0 50%;">UTF-8</span>
<span class="t " style="left:1160.00px;top:1039.58px;font-size:24.3px;color:#ffffff;transform:scaleX(0.8258);transform-origin:0 50%;">CRLF</span>
<span class="t " style="left:1244.50px;top:1039.08px;font-size:24.3px;color:#ffffff;transform:scaleX(0.9350);transform-origin:0 50%;">{ }</span>
<span class="t " style="left:1282.00px;top:1039.58px;font-size:24.3px;color:#ffffff;transform:scaleX(0.9405);transform-origin:0 50%;">JavaScript</span>
<svg style="left:1418.5px;top:1048px" width="29" height="22" viewBox="0 0 38 30" preserveAspectRatio="none" >
<path d="M19 4 C14 0 5 1 5 8 C5 11 5 12 4 14 C1 16 1 18 1 21 C1 26 9 30 19 30 C29 30 37 26 37 21 C37 18 37 16 34 14 C33 12 33 11 33 8 C33 1 24 0 19 4 Z" fill="#fff"/>
<rect x="7.500" y="4.500" width="9" height="8.500" rx="3.500" fill="#0086d1"/><rect x="21.500" y="4.500" width="9" height="8.500" rx="3.500" fill="#0086d1"/>
<path d="M6 16 H32 V22 Q26 25.500 19 25.500 Q12 25.500 6 22 Z" fill="#0086d1"/>
<rect x="12.300" y="17.500" width="3.600" height="6.500" rx="1.800" fill="#fff"/><rect x="22" y="17.500" width="3.600" height="6.500" rx="1.800" fill="#fff"/>
</svg>
<svg style="left:1481.8px;top:1047.5px" width="25" height="25" viewBox="0 0 25 25" preserveAspectRatio="none" ><circle cx="12.5" cy="12.500" r="11.200" fill="none" stroke="#ffffff" stroke-width="2.200"/><path d="M20.500 4.500 L4.500 20.500" stroke="#ffffff" stroke-width="2.200"/></svg>
<span class="t " style="left:1516.50px;top:1039.58px;font-size:24.3px;color:#ffffff;transform:scaleX(0.9547);transform-origin:0 50%;">Port : 5500</span>
<svg style="left:1664px;top:1049.5px" width="29" height="19" viewBox="0 0 29 19" preserveAspectRatio="none" ><path d="M1 11 L4.500 17.500 M8.500 10.500 L13 17.500 L27.500 1.500 M8.800 17.500 L21 4" fill="none" stroke="#ffffff" stroke-width="2" stroke-linecap="round" stroke-linejoin="round"/></svg>
<span class="t " style="left:1701.00px;top:1039.58px;font-size:24.3px;color:#ffffff;transform:scaleX(0.9855);transform-origin:0 50%;">Prettier</span>
<svg style="left:1814.5px;top:1048px" width="24" height="24" viewBox="0 0 24 24" preserveAspectRatio="none" ><path d="M12 1.500 Q4.800 1.500 4.800 9 V13.500 L1.800 18.500 H22.200 L19.200 13.500 V9 Q19.200 1.500 12 1.500 Z" fill="none" stroke="#ffffff" stroke-width="2.100" stroke-linejoin="round"/><path d="M9 19 Q9 22.500 12 22.500 Q15 22.500 15 19" fill="none" stroke="#ffffff" stroke-width="2.100"/></svg>
</div></body></html>
